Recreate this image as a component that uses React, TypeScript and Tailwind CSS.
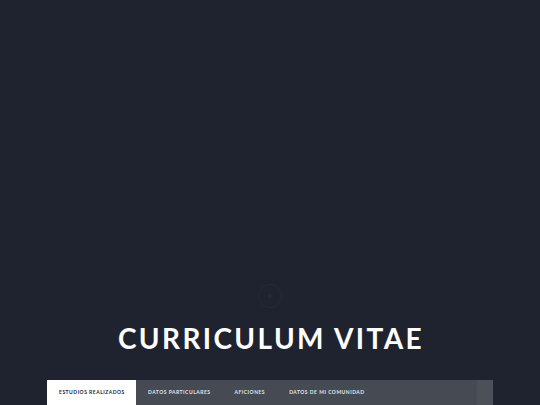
import React from "react";

const tabs = ["ESTUDIOS REALIZADOS", "DATOS PARTICULARES", "AFICIONES", "DATOS DE MI COMUNIDAD"];

export default function App() {
  return (
    <div
      className="relative h-[405px] w-full overflow-hidden bg-[#1f2330] flex flex-col"
      style={{ fontFamily: 'Lato, "Noto Sans", sans-serif' }}
    >
      {/* faint loader ring */}
      <div className="absolute left-[257px] top-[283px] w-[26px] h-[26px]">
        <svg viewBox="0 0 26 26" className="w-full h-full">
          <circle cx="13" cy="13" r="11.5" fill="none" stroke="#242a37" strokeWidth="1" />
          <path d="M13 10.5v5M10.5 13h5" stroke="#262e3c" strokeWidth="1.2" />
        </svg>
      </div>

      <div className="flex-1" />

      <h1 className="text-center text-white font-bold text-[28px] leading-none tracking-[0.085em] pl-[2px]">
        CURRICULUM VITAE
      </h1>

      <div className="mt-[28px] mx-[47px] h-[25px] bg-[#464a53] flex shrink-0">
        {tabs.map((t, i) => (
          <div
            key={t}
            className={
              "px-3 pt-[10px] text-[5px] font-bold tracking-[0.1em] leading-none whitespace-nowrap " +
              (i === 0 ? "bg-white text-[#23262d] w-[89px] text-center" : "text-[#e4e6ea]")
            }
          >
            {t}
          </div>
        ))}
        <div className="flex-1" />
        <div className="w-[16px] bg-[#4c5059]" />
      </div>
    </div>
  );
}
